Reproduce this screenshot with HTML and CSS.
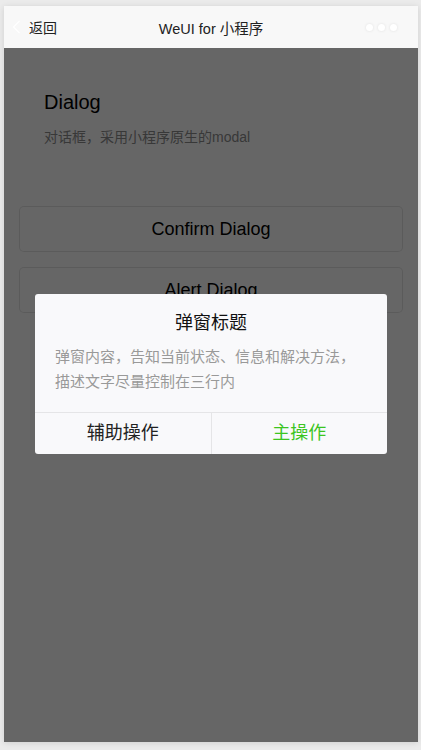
FILE: index.html
```html
<!DOCTYPE html>
<html lang="zh">
<head>
<meta charset="utf-8">
<title>WeUI Dialog</title>
<link rel="stylesheet" href="styles.css">
</head>
<body>
<div class="phone">
  <header class="nav">
    <div class="nav-back">
      <svg class="chev" width="9" height="14" viewBox="0 0 9 14"><path d="M7.5 1 L1.5 7 L7.5 13" fill="none" stroke="#fff" stroke-width="1.3"/></svg>
      <span>返回</span>
    </div>
    <div class="nav-title">WeUI for 小程序</div>
    <div class="nav-dots"><i></i><i></i><i></i></div>
  </header>
  <main class="page">
    <div class="page-hd">
      <div class="page-title">Dialog</div>
      <div class="page-desc">对话框，采用小程序原生的modal</div>
    </div>
    <div class="page-bd">
      <div class="btn">Confirm Dialog</div>
      <div class="btn">Alert Dialog</div>
    </div>
    <div class="mask"></div>
  </main>
  <div class="dialog">
    <div class="dialog-hd">弹窗标题</div>
    <div class="dialog-bd">弹窗内容，告知当前状态、信息和解决方法，描述文字尽量控制在三行内</div>
    <div class="dialog-ft">
      <div class="dialog-btn">辅助操作</div>
      <div class="dialog-btn primary">主操作</div>
    </div>
  </div>
</div>
</body>
</html>
```
FILE: styles.css
```css
* { box-sizing: border-box; }
html, body { margin: 0; padding: 0; }
body {
  background: #ebebeb;
  font-family: "Liberation Sans", "Noto Sans CJK SC", sans-serif;
  width: 421px;
  height: 750px;
  overflow: hidden;
}
.phone {
  position: relative;
  margin: 6px 0 0 4px;
  width: 414px;
  height: 736px;
  background: #f8f8f8;
  box-shadow: 0 1px 6px rgba(0,0,0,0.12);
  display: flex;
  flex-direction: column;
}
.nav {
  height: 42px;
  flex: none;
  background: #f8f8f8;
  display: flex;
  align-items: center;
  position: relative;
  color: #222;
}
.nav-back {
  display: flex;
  align-items: center;
  padding-left: 8px;
  font-size: 14px;
  gap: 8px;
}
.chev { display: block; }
.nav-title {
  position: absolute;
  left: 0; right: 0;
  text-align: center;
  font-size: 14.5px;
  pointer-events: none;
}
.nav-dots {
  margin-left: auto;
  margin-right: 21px;
  display: flex;
  gap: 5px;
}
.nav-dots i {
  width: 7px; height: 7px;
  border-radius: 50%;
  background: #fff;
  box-shadow: 0 0 3px rgba(0,0,0,0.1);
}
.page {
  position: relative;
  flex: 1;
  background: #f8f8f8;
}
.page-hd { padding: 40px 40px 0; }
.page-title {
  font-size: 20px;
  line-height: 28px;
  color: #000;
}
.page-desc {
  margin-top: 11px;
  font-size: 14px;
  line-height: 20px;
  color: #888;
}
.page-bd {
  padding: 59px 15px 0;
  display: flex;
  flex-direction: column;
  gap: 15px;
}
.btn {
  height: 46px;
  line-height: 44px;
  border: 1px solid rgba(0,0,0,0.1);
  border-radius: 5px;
  background: #f8f8f8;
  text-align: center;
  font-size: 18px;
  color: #000;
}
.mask {
  position: absolute;
  inset: 0;
  background: rgba(0,0,0,0.59);
}
.dialog {
  position: absolute;
  left: 31px;
  width: 352px;
  top: 288px;
  background: #f9f9fb;
  border-radius: 3px;
  overflow: hidden;
  text-align: center;
}
.dialog-hd {
  padding: 16px 20px 0;
  font-size: 18px;
  line-height: 26px;
  color: #111;
}
.dialog-bd {
  padding: 8px 20px 18px;
  font-size: 15px;
  line-height: 25px;
  color: #999;
  text-align: left;
}
.dialog-ft {
  display: flex;
  border-top: 1px solid #e5e5e7;
  height: 42px;
}
.dialog-btn {
  flex: 1;
  line-height: 41px;
  font-size: 18px;
  color: #222;
}
.dialog-btn + .dialog-btn { border-left: 1px solid #e5e5e7; }
.dialog-btn.primary { color: #3cc51f; }
```
